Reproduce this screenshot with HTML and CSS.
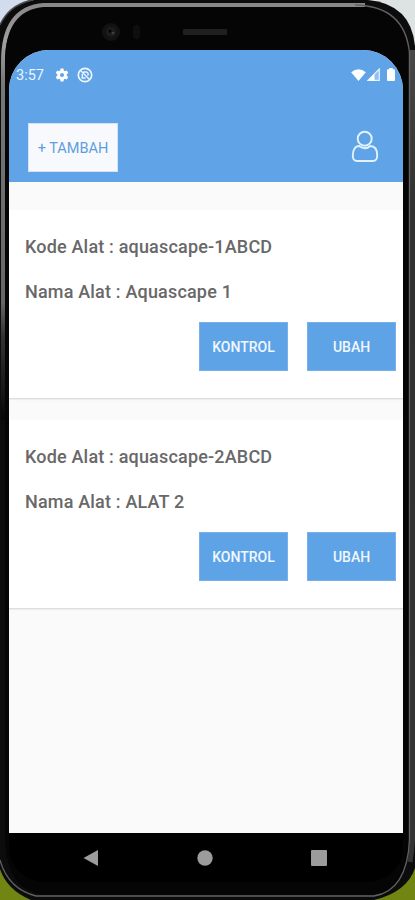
FILE: index.html
```html
<!DOCTYPE html>
<html lang="id">
<head>
<meta charset="utf-8">
<title>Daftar Alat</title>
<link rel="stylesheet" href="styles.css">
</head>
<body>
<div class="device">
  <svg class="frame" viewBox="0 0 415 900" aria-hidden="true">
    <defs>
      <linearGradient id="sky" x1="0" y1="0" x2="1" y2="0"><stop offset="0" stop-color="#d3dcec"/><stop offset="1" stop-color="#dde3e2"/></linearGradient>
      <linearGradient id="rim" gradientUnits="userSpaceOnUse" x1="0" y1="0" x2="0" y2="420"><stop offset="0" stop-color="#858585"/><stop offset=".1" stop-color="#a0a0a0"/><stop offset=".2" stop-color="#777"/><stop offset=".72" stop-color="#666"/><stop offset=".8" stop-color="#333"/><stop offset="1" stop-color="#070707"/></linearGradient>
      <linearGradient id="side" gradientUnits="userSpaceOnUse" x1="0" y1="50" x2="0" y2="850"><stop offset="0" stop-color="#484848"/><stop offset=".2" stop-color="#303030"/><stop offset="1" stop-color="#343434"/></linearGradient>
    </defs>
    <rect width="415" height="450" fill="url(#sky)"/>
    <rect y="450" width="415" height="450" fill="#708512"/>
    <path d="M34 0H368Q411 4 415 46V868Q407 892 374 900H31Q7 890 0 869V25Q8 5 34 0Z" fill="#0c0c0d"/>
    <path d="M0 25Q9 5 32 0" fill="none" stroke="#4c4c4e" stroke-width="1.500"/>
    <path d="M3 420V62Q3 8 44 5H365" fill="none" stroke="url(#rim)" stroke-width="4"/>
    <path d="M5 840V62Q5 10 48 7H364Q405 8 408 55V850Q403 894 369 895H46Q7 892 5 840Z" fill="#050506"/>
    <path d="M412.500 50V840Q412 850 410 862" fill="none" stroke="url(#side)" stroke-width="5"/>
    <path d="M355 5Q405 6 409.500 53V840Q407 891 374 896H36Q8 889 0 860" fill="none" stroke="#626264" stroke-width="1.300"/>
    <circle cx="111" cy="32" r="9" fill="#121213"/>
    <circle cx="111" cy="32" r="5" fill="#1b1d1f"/><circle cx="110" cy="31" r="1.500" fill="#000"/><circle cx="113" cy="33" r="1.300" fill="#3c4144"/>
    <rect x="133" y="25" width="7" height="14" rx="3" fill="#0e0e0f"/>
    <rect x="183" y="29" width="44" height="6" rx="1" fill="#202021"/>
  </svg>
  <main class="screen">
    <header class="header">
      <div class="status">
        <span class="time">3:57</span>
        <svg class="gear" viewBox="0 0 24 24"><path fill="#fff" fill-rule="evenodd" d="M9.500 1h5l.6 3.300 1.900 1.100 3.200-1.200 2.500 4.300-2.600 2.200v2.600l2.600 2.200-2.500 4.300-3.200-1.200-1.900 1.100-.6 3.300h-5l-.6-3.300L7 18.600l-3.200 1.200-2.500-4.300 2.600-2.200v-2.600L1.300 8.500l2.500-4.300L7 5.400l1.900-1.100zM12 8.500a3.500 3.500 0 1 0 0 7a3.500 3.500 0 0 0 0-7z"/></svg>
        <svg class="dnd" viewBox="0 0 16 16" fill="none" stroke="#edf7ff"><circle cx="8" cy="8" r="6.700" stroke-width="1.700"/><path d="M3.500 3.500L12.500 12.500M6.300 5H9A2 2 0 0 1 10.500 8.500M5.300 7V11H8.500" stroke-width="1.400"/></svg>
        <span class="spacer"></span>
        <svg class="wifi" viewBox="0 0 16 13"><path fill="#fff" d="M0 3.500Q8-3 16 3.500L8 13Z"/></svg>
        <svg class="signal" viewBox="0 0 13 13"><path d="M1 12.400H12.300V1Z" fill="#8fc1f1" stroke="#e5f3ff" stroke-width="1.200"/><path d="M1 12.500L7.500 6V12.500Z" fill="#fff"/></svg>
        <svg class="battery" viewBox="0 0 8 13"><path fill="#fff" d="M2.300 0H5.700V1.200H7Q8 1.200 8 2.200V12Q8 13 7 13H1Q0 13 0 12V2.200Q0 1.200 1 1.200H2.300Z"/></svg>
      </div>
      <div class="toolbar">
        <button class="button add">+ TAMBAH</button>
        <svg class="profile" viewBox="0 0 28 33" fill="none" stroke="#e0f3ff" stroke-width="1.900"><circle cx="13.700" cy="8.700" r="7"/><path d="M8.200 16C4 16 1.800 20 1.800 25.500Q1.800 31 6 31H22Q26.200 31 26.200 25.500C26.200 20 24 16 19.200 16Q14 20.500 8.200 16Z" stroke-linejoin="round"/></svg>
      </div>
    </header>
    <section class="card">
      <p class="line code">Kode Alat : aquascape-1ABCD</p>
      <p class="line name">Nama Alat : Aquascape 1</p>
      <div class="actions"><button class="button">KONTROL</button><button class="button">UBAH</button></div>
    </section>
    <section class="card">
      <p class="line code">Kode Alat : aquascape-2ABCD</p>
      <p class="line name">Nama Alat : ALAT 2</p>
      <div class="actions"><button class="button">KONTROL</button><button class="button">UBAH</button></div>
    </section>
  </main>
  <nav class="nav">
    <svg viewBox="0 0 18 18"><path d="M1.500 9L16 1V17Z" fill="#9c9c9c"/></svg>
    <svg viewBox="0 0 18 18"><circle cx="9" cy="9" r="7.700" fill="#9c9c9c"/></svg>
    <svg viewBox="0 0 18 18"><rect x="1" y="1" width="16" height="16" rx="1" fill="#9c9c9c"/></svg>
  </nav>
</div>
</body>
</html>
```

FILE: styles.css
```css
* { box-sizing: border-box; }
body { margin: 0; font-family: Roboto, "Liberation Sans", sans-serif; }
.device { position: relative; width: 415px; height: 900px; padding: 50px 12px 0 9px; overflow: hidden; }
.frame { position: absolute; inset: 0; width: 415px; height: 900px; }
.screen { position: relative; height: 783px; background: #fafafa; border-radius: 40px 40px 0 0; overflow: hidden; }
.header { height: 132px; background: #60a3e7; margin-bottom: 28px; }
.status { display: flex; align-items: center; height: 49px; padding: 0 8px 0 7px; }
.time { width: 39px; font-size: 14.5px; line-height: 17px; padding-top: 1px; color: #e9f5ff; }
.gear { width: 14px; height: 14px; }
.dnd { width: 16px; height: 16px; margin-left: 8px; }
.spacer { flex: 1; }
.wifi { width: 15px; height: 12px; margin-right: 1px; }
.signal { width: 13px; height: 13px; margin-right: 7px; }
.battery { width: 8px; height: 13px; }
.toolbar { display: flex; justify-content: space-between; align-items: flex-start; padding: 24px 24px 0 19px; }
.profile { width: 28px; height: 33px; margin-top: 7px; }
.button { width: 89px; height: 49px; padding: 1px 0 0; border: 1px solid #78b1ea; background: #5fa3e7; color: #f1f8ff; font: 500 14px Roboto, sans-serif; }
.add { width: 90px; border-color: #d2e3f5; background: #f7f9fc; color: #609ee0; font-weight: 400; font-size: 14.5px; }
.card { height: 189px; padding: 25px 7px 0 16px; margin-bottom: 21px; background: #fff; border-bottom: 1px solid #dedede; box-shadow: 0 1px 1px #ededed; }
.line { margin: 0; height: 24px; line-height: 24px; font-size: 18px; font-weight: 500; letter-spacing: 0.18px; color: #686868; white-space: nowrap; }
.name { margin-top: 21px; }
.actions { display: flex; justify-content: flex-end; gap: 19px; margin-top: 18px; }
.nav { position: relative; display: flex; justify-content: space-between; align-items: center; height: 49px; padding: 0 75px 0 73px; background: #000; border-radius: 0 0 35px 35px; }
.nav svg { width: 18px; height: 18px; }
```
